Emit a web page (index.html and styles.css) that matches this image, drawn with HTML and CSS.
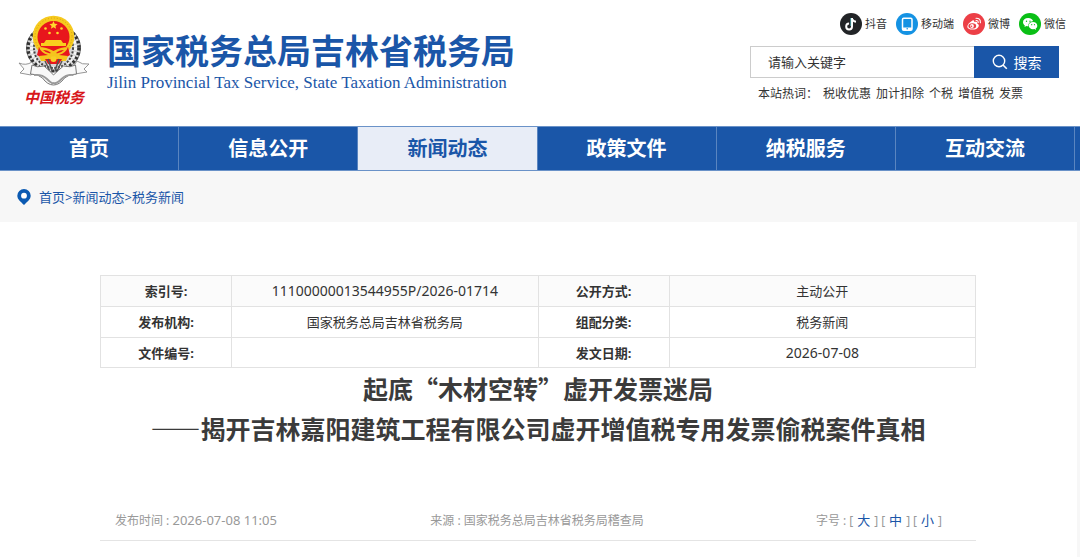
FILE: index.html
```html
<!DOCTYPE html>
<html lang="zh-CN">
<head>
<meta charset="utf-8">
<title>国家税务总局吉林省税务局</title>
<link rel="stylesheet" href="styles.css">
</head>
<body>
<header class="header">
  <div class="brand">
    <div class="emblem">
      <svg class="emblem-art" viewBox="0 0 72 72" aria-hidden="true">
        <ellipse cx="35.500" cy="33" rx="27" ry="24" fill="#d6d6d6" stroke="#777" stroke-width="1"/>
        <ellipse cx="35.500" cy="33" rx="25.500" ry="22.500" fill="none" stroke="#333" stroke-width="3.500" stroke-dasharray="2.600 2"/>
        <ellipse cx="35.500" cy="33" rx="22" ry="20" fill="none" stroke="#f7f7f7" stroke-width="3" stroke-dasharray="2.600 1.400"/>
        <ellipse cx="35.500" cy="33" rx="19.500" ry="20" fill="none" stroke="#444" stroke-width="2" stroke-dasharray="2 1.500"/>
        <path d="M7 1h57v12H7z" fill="#fff"/>
        <circle cx="35.500" cy="21.500" r="20.800" fill="#f6ca1e"/>
        <circle cx="35.500" cy="21.500" r="18.500" fill="none" stroke="#d99c15" stroke-width="1" stroke-dasharray="1 2"/>
        <circle cx="35.500" cy="22" r="16" fill="#e8161c"/>
        <path d="M21 32h29l2 8-8 5H27l-8-5z" fill="#e8161c"/>
        <path d="m35.500 6 1.200 2.700 2.900.3-2.200 1.900.7 2.900-2.600-1.500-2.600 1.500.7-2.900-2.200-1.900 2.900-.3z" fill="#ffd92c"/>
        <g fill="#ffd92c"><circle cx="27.500" cy="13.500" r="1.300"/><circle cx="43.500" cy="13.500" r="1.300"/><circle cx="31.500" cy="18" r="1.300"/><circle cx="39.500" cy="18" r="1.300"/></g>
        <path d="M28 25h15l2 3h3v3H23v-3h3z" fill="#f9cf1d"/>
        <path d="M21 32q7 0 14.500 4Q43 32 50 32q-2 6-9 8l9 1-2 5H23l-2-5 9-1q-7-2-9-8z" fill="#f5c51d"/>
        <path d="M25 35q5 0 8 3-4 1-8-3zm21 0q-5 0-8 3 4 1 8-3z" fill="#e8161c"/>
        <path d="M27 44h6l2.500-3 2.500 3h6l-3 5H30z" fill="#e8161c"/>
        <circle cx="35.500" cy="44" r="3" fill="#f7ce28"/>
        <path d="m27 46 4 8m-1-10 4 12m10-10-4 8m1-10-4 12" stroke="#555" stroke-width="1.500"/>
        <path d="M1 48q7 3 13-1l5 8-6 5-11-2 4-4zM71 49q-7 1-12-3l-6 9 4 4 12-2-3-3z" fill="#fafafa" stroke="#8a8a8a" stroke-width=".9"/>
        <path d="M14 50q5 3 12 1 5 4 9.500 9 5-5 10-9 7 2 12-1l1 9q-8 0-12 4-5 7-11 7t-11-7q-4-4-12-4z" fill="#f8f8f8" stroke="#777" stroke-width="1"/>
        <path d="M16 60q8-1 13 4t6.500 4q3 1 8-4t12-4" fill="none" stroke="#999" stroke-width="1.800"/>
      </svg>
      <span class="emblem-text">中国税务</span>
    </div>
    <div class="brand-names">
      <h1 class="brand-cn">国家税务总局吉林省税务局</h1>
      <p class="brand-en">Jilin Provincial Tax Service, State Taxation Administration</p>
    </div>
  </div>
  <div class="tools">
    <div class="social">
      <a href="#" class="social-link">
        <svg class="social-icon" viewBox="0 0 22 22" aria-hidden="true"><circle cx="11" cy="11" r="11" fill="#222427"/><path d="M12 5v8.500a2.900 2.900 0 1 1-2.900-2.900M12 5q.4 3.400 4 3.700" fill="none" stroke="#fff" stroke-width="2"/><path d="M10.700 5v8" stroke="#5eeaf0" stroke-width=".6"/></svg>抖音</a>
      <a href="#" class="social-link">
        <svg class="social-icon" viewBox="0 0 22 22" aria-hidden="true"><circle cx="11" cy="11" r="11" fill="#1492e3"/><rect x="6.500" y="5.200" width="9.500" height="12" rx="1.200" fill="none" stroke="#fff" stroke-width="1.500"/><path d="M6.500 14.500H16V17H6.500z" fill="#fff"/><circle cx="11.200" cy="15.800" r=".8" fill="#1492e3"/></svg>移动端</a>
      <a href="#" class="social-link">
        <svg class="social-icon" viewBox="0 0 22 22" aria-hidden="true"><circle cx="11" cy="11" r="11" fill="#ec3f46"/><path d="M9.500 7.500c1.500-.5 2 .3 1.700 1.600 2-.8 3.500-.3 3 1.300 3.500 1.400 1.200 6.200-4.500 6.200-6.800 0-7.500-4.500-.2-9.100z" fill="#fff"/><ellipse cx="9.300" cy="12.900" rx="3.900" ry="2.700" fill="#ec3f46"/><circle cx="9" cy="13" r="1.900" fill="#fff"/><circle cx="8.500" cy="13.300" r=".8" fill="#ec3f46"/><path d="M13 7.500q2.200-.3 2.200 2M13 5.200q4.600-.2 4.400 4.500" fill="none" stroke="#fff" stroke-width="1.100" stroke-linecap="round"/></svg>微博</a>
      <a href="#" class="social-link">
        <svg class="social-icon" viewBox="0 0 22 22" aria-hidden="true"><circle cx="11" cy="11" r="11" fill="#0abf16"/><path d="M9.200 5C6 5 4 6.800 4 9.200c0 1.400.8 2.500 1.900 3.300L5.500 14l1.900-.9q.9.300 2 .2C9 10.500 11 8.300 14.200 8.300 13.700 6.300 11.800 5 9.200 5z" fill="#fff"/><path d="M14 9c-2.500 0-4.300 1.600-4.300 3.600s1.800 3.700 4.300 3.700l1.500-.2 1.600.9-.4-1.400c1-.7 1.600-1.700 1.600-2.900C18.300 10.600 16.500 9 14 9z" fill="#fff"/><g fill="#0abf16"><circle cx="7.500" cy="8.200" r=".7"/><circle cx="11" cy="8.200" r=".7"/><circle cx="12.700" cy="11.700" r=".6"/><circle cx="15.500" cy="11.700" r=".6"/></g></svg>微信</a>
    </div>
    <form class="search">
      <input class="search-input" type="text" placeholder="请输入关键字" aria-label="请输入关键字">
      <button class="search-button" type="button">
        <svg class="search-icon" viewBox="0 0 16 16" aria-hidden="true"><circle cx="7" cy="7" r="5.700" fill="none" stroke="#fff" stroke-width="1.400"/><path d="m11 11 3.800 3.800" stroke="#fff" stroke-width="1.600"/></svg>搜索</button>
    </form>
    <div class="hot"><span class="hot-label">本站热词：</span><a href="#">税收优惠</a><a href="#">加计扣除</a><a href="#">个税</a><a href="#">增值税</a><a href="#">发票</a></div>
  </div>
</header>
<nav class="nav">
  <ul class="nav-list">
    <li><a href="#">首页</a></li>
    <li><a href="#">信息公开</a></li>
    <li><a href="#" class="active">新闻动态</a></li>
    <li><a href="#">政策文件</a></li>
    <li><a href="#">纳税服务</a></li>
    <li><a href="#">互动交流</a></li>
  </ul>
</nav>
<div class="crumbs">
  <svg class="pin" viewBox="0 0 14 16" aria-hidden="true"><path d="M7 0a6.700 6.700 0 0 1 6.700 6.700C13.700 10.500 9.800 13 7 16 4.200 13 .3 10.500.3 6.700A6.700 6.700 0 0 1 7 0z" fill="#0b5ab2"/><circle cx="7" cy="6.700" r="2.900" fill="#fff"/></svg>
  <div><a href="#">首页</a>&gt;<a href="#">新闻动态</a>&gt;<a href="#">税务新闻</a></div>
</div>
<main class="article">
  <table class="info">
    <tr><th scope="row">索引号:</th><td class="figures">11100000013544955P/2026-01714</td><th scope="row">公开方式:</th><td>主动公开</td></tr>
    <tr><th scope="row">发布机构:</th><td>国家税务总局吉林省税务局</td><th scope="row">组配分类:</th><td>税务新闻</td></tr>
    <tr><th scope="row">文件编号:</th><td></td><th scope="row">发文日期:</th><td class="figures">2026-07-08</td></tr>
  </table>
  <h2 class="title">起底“木材空转”虚开发票迷局<br>——揭开吉林嘉阳建筑工程有限公司虚开增值税专用发票偷税案件真相</h2>
  <div class="meta">
    <div>发布时间 : <time class="time">2026-07-08 11:05</time></div>
    <div class="meta-source">来源 : 国家税务总局吉林省税务局稽查局</div>
    <div class="meta-size">字号 : <span>[<button type="button">大</button>]</span><span>[<button type="button">中</button>]</span><span>[<button type="button">小</button>]</span></div>
  </div>
</main>
</body>
</html>
```
FILE: styles.css
```css
* { box-sizing: border-box; }
body {
  margin: 0;
  min-height: 100vh;
  display: flex;
  flex-direction: column;
  background: #f7f7f7;
  color: #333;
  font: 13px/20px "Noto Sans", "Noto Sans CJK SC", sans-serif;
}
a { color: inherit; text-decoration: none; }
h1, h2, p, ul { margin: 0; padding: 0; }

.header {
  display: flex;
  justify-content: space-between;
  background: #fff;
  padding: 13px 14px 13px 18px;
  min-height: 126px;
}
.brand { display: flex; gap: 17px; }
.emblem { display: flex; flex-direction: column; align-items: center; padding-top: 2px; }
.emblem-art { width: 72px; height: 72px; }
.emblem-text {
  color: #d8161b;
  font-family: "Noto Sans CJK SC", sans-serif;
  font-size: 15px;
  font-style: italic;
  font-weight: 700;
  line-height: 20px;
}
.brand-names { padding-top: 17px; color: #1a56a8; }
.brand-cn { font: 700 34px/40px "Noto Sans CJK SC", sans-serif; }
.brand-en { font: 17px/26px "Liberation Serif", serif; }

.tools { width: 316px; }
.social { display: flex; justify-content: flex-end; gap: 9px; }
.social-link { display: flex; align-items: center; gap: 3px; font-size: 11px; line-height: 22px; }
.social-icon { width: 22px; height: 22px; }
.search { display: flex; height: 32px; margin: 11px 7px 0 0; }
.search-input {
  flex: 1;
  min-width: 0;
  border: 1px solid #ccc;
  border-right: 0;
  padding: 0 17px;
  font: inherit;
  color: #333;
}
.search-input::placeholder { color: #333; opacity: 1; }
.search-button {
  display: flex;
  align-items: center;
  justify-content: center;
  gap: 6px;
  width: 85px;
  border: 0;
  background: #1a56a8;
  color: #fff;
  font: 14px/20px "Noto Sans CJK SC", sans-serif;
}
.search-icon { width: 16px; height: 16px; }
.hot { display: flex; gap: 5px; padding: 6px 8px 0; font-size: 12px; }

.nav { background: #1a56a8; padding-right: 5px; border: solid #6a92c8; border-width: 1px 0; }
.nav-list { display: grid; grid-template-columns: repeat(6, 1fr); list-style: none; }
.nav-list a {
  display: block;
  border-right: 1px solid #5a85c0;
  padding-top: 1px;
  color: #fff;
  font-size: 20px;
  font-weight: 700;
  line-height: 42px;
  text-align: center;
}
.nav-list .active { background: #e8edf7; color: #1a56a8; }

.crumbs { display: flex; align-items: center; gap: 8px; min-height: 51px; padding: 0 17px; color: #1a56a8; }
.pin { width: 14px; height: 16px; }

.article { flex: 1; margin-right: 3px; padding: 53px 101px 16px 100px; background: #fff; }
.info { width: 100%; table-layout: fixed; border-collapse: collapse; text-align: center; }
.info th, .info td { height: 31px; padding: 0; border: 1px solid #e2e2e2; }
.info tr:last-child > * { height: 30px; }
.info th { width: 15%; }
.info td { width: 35%; }
.info .figures { font-size: 14px; }
.info tr:first-child { background: #fbfbfb; }
.title {
  color: #3b3b3b;
  font: 700 25px/40px "Noto Sans CJK SC", sans-serif;
  text-align: center;
}
.meta {
  display: grid;
  grid-template-columns: 1fr auto 1fr;
  align-items: baseline;
  margin-top: 62px;
  padding: 0 34px 9px 15px;
  border-bottom: 1px solid #e4e4e4;
  color: #999;
  font-size: 12px;
}
.time { font-size: 13px; }
.meta-source { padding-left: 17px; }
.meta-size { display: flex; align-items: baseline; justify-content: flex-end; gap: 3px; }
.meta-size button { border: 0; padding: 0 4px; background: none; color: #1a56a8; font: inherit; font-size: 13px; }
```
